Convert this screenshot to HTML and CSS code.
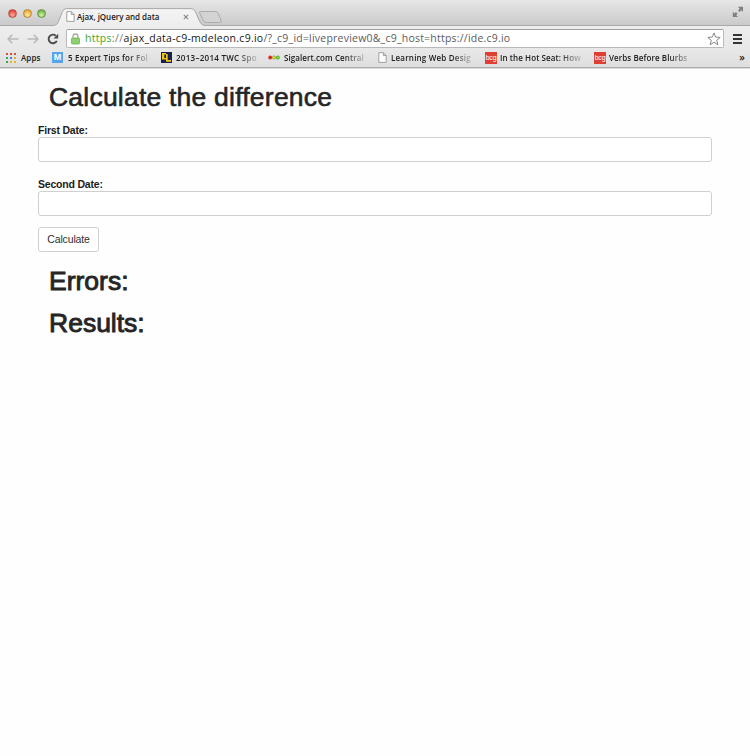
FILE: index.html
```html
<!DOCTYPE html>
<html lang="en">
<head>
<meta charset="utf-8">
<title>Ajax, jQuery and data</title>
<link rel="stylesheet" href="styles.css">
</head>
<body>
<header class="chrome">
  <div class="tabstrip">
    <div class="lights"><i class="light red"></i><i class="light yellow"></i><i class="light green"></i></div>
    <div class="tab">
      <svg class="tab-shape" width="174" height="19" viewBox="0 0 174 19">
        <defs><linearGradient id="tabfill" x1="0" y1="0" x2="0" y2="1"><stop offset="0" stop-color="#f4f4f4"/><stop offset="1" stop-color="#ededed"/></linearGradient></defs>
        <path d="M0 17.500C3.500 17.300 4.500 16 5.500 13.500L9.500 3.500Q10.800.6 13.500.6H138Q141 .6 142.300 3.500L147 14Q148.500 17.500 152 17.500V19H0Z" fill="url(#tabfill)"/>
        <path d="M0 17.500C3.500 17.300 4.500 16 5.500 13.500L9.500 3.500Q10.800.6 13.500.6H138Q141 .6 142.300 3.500L147 14Q148.500 17.500 152 17.500" fill="none" stroke="#a0a0a0" stroke-width=".9"/>
        <path d="M147.500 3.500H162.500Q164.500 3.500 165.300 5.500L168 12Q169 14.500 166.500 14.500H153.500Q151 14.500 150 12L146.700 5Q146 3.500 147.500 3.500Z" fill="#d3d3d3" stroke="#a6a6a6" stroke-width=".9"/>
      </svg>
      <svg class="page" width="9" height="11" viewBox="0 0 9 11"><path d="M.8.6H5.300L8.200 3.500V10.400H.8ZM5.300.6V3.500H8.200" fill="#fdfdfd" stroke="#999" stroke-width=".9"/></svg>
      <span class="tab-title">Ajax, jQuery and data</span>
      <svg class="close" width="6" height="6" viewBox="0 0 6 6"><path d="M.8.8L5.200 5.200M5.200.8L.8 5.200" stroke="#858585" stroke-width="1.100"/></svg>
    </div>
    <svg class="expand" width="12" height="12" viewBox="0 0 12 12"><path d="M5.800 .8H11V6L9.300 4.300L7.600 6L6 4.400L7.700 2.700Z" fill="#808080"/><path d="M6 11H.8V5.800L2.500 7.500L3.900 6.100L5.500 7.700L4.200 9.200Z" fill="#808080"/></svg>
  </div>
  <div class="toolbar">
    <svg class="nav" width="12" height="10" viewBox="0 0 12 10"><path d="M5.200.8L1.200 5L5.200 9.200M1.500 5H11.500" fill="none" stroke="#b9b9b9" stroke-width="1.600"/></svg>
    <svg class="nav forward" width="12" height="10" viewBox="0 0 12 10"><path d="M6.800.8L10.800 5L6.800 9.200M10.500 5H.5" fill="none" stroke="#b9b9b9" stroke-width="1.600"/></svg>
    <svg class="reload" width="12" height="12" viewBox="0 0 12 12"><path d="M8.800 2.700A4.300 4.300 0 1 0 9.800 7.800" fill="none" stroke="#4b4b4b" stroke-width="1.900"/><path d="M11.200.7V5.400H6.500Z" fill="#4b4b4b"/></svg>
    <div class="omnibox">
      <svg class="lock" width="9" height="12" viewBox="0 0 9 12"><path d="M2 6V3.500A2.500 2.500 0 0 1 7 3.500V6" fill="none" stroke="#a3aa9f" stroke-width="1.300"/><rect x=".5" y="5" width="8" height="6" rx=".8" fill="#84cb63" stroke="#72b655" stroke-width=".8"/><path d="M1 7H8M1 9H8" stroke="#a9df8e" stroke-width=".6"/></svg>
      <div class="url"><span class="secure">https</span><span class="sep">://</span><span class="host">ajax_data-c9-mdeleon.c9.io</span><span class="path">/?_c9_id=livepreview0&amp;_c9_host=https://ide.c9.io</span></div>
      <svg class="star" width="14" height="14" viewBox="0 0 14 14"><path d="M7 .9L8.700 5.100L13.200 5.400L9.700 8.300L10.900 12.800L7 10.300L3.100 12.800L4.300 8.300L.8 5.400L5.300 5.100Z" fill="#fff" stroke="#888" stroke-width="1"/></svg>
    </div>
    <div class="menu"><i></i><i></i><i></i></div>
  </div>
  <nav class="bookmarks">
    <div class="bm apps"><div class="grid"><i class="r"></i><i class="r"></i><i class="r"></i><i class="g"></i><i class="b"></i><i class="y"></i><i class="g"></i><i class="y"></i><i class="y"></i></div><span>Apps</span></div>
    <div class="bm tips"><b class="m-icon">M</b><span class="fade">5 Expert Tips for Fol</span></div>
    <div class="bm twc"><svg width="11" height="11" viewBox="0 0 11 11"><rect width="11" height="11" fill="#18204b"/><path d="M1 1H5V2.500H3.300V6H5V7.500H1ZM5 2H6.700V8H10V9.700H5Z" fill="#f1c51c"/></svg><span class="fade">2013–2014 TWC Spo</span></div>
    <div class="bm sig"><svg width="12" height="5" viewBox="0 0 12 5"><circle cx="2.200" cy="2.500" r="1.900" fill="#d32c22"/><circle cx="6" cy="2.500" r="1.600" fill="#e9e32f" stroke="#8c8b19" stroke-width=".7"/><circle cx="9.800" cy="2.500" r="1.600" fill="#7be23c" stroke="#378d20" stroke-width=".7"/></svg><span class="fade">Sigalert.com Central</span></div>
    <div class="bm learn"><svg width="9" height="11" viewBox="0 0 9 11"><path d="M.8.6H5.300L8.200 3.500V10.400H.8ZM5.300.6V3.500H8.200" fill="#fdfdfd" stroke="#999" stroke-width=".9"/></svg><span class="fade">Learning Web Desig</span></div>
    <div class="bm hot"><b class="bcg">bcg</b><span class="fade">In the Hot Seat: How</span></div>
    <div class="bm verbs"><b class="bcg">bcg</b><span class="fade">Verbs Before Blurbs</span></div>
    <span class="more">»</span>
  </nav>
</header>
<main>
  <h1>Calculate the difference</h1>
  <form>
    <label for="first">First Date:</label>
    <input id="first" type="text">
    <label for="second">Second Date:</label>
    <input id="second" type="text">
    <button type="button">Calculate</button>
  </form>
  <h2 class="errors">Errors:</h2>
  <h2 class="results">Results:</h2>
</main>
</body>
</html>
```
FILE: styles.css
```css
* { box-sizing: border-box; }
body { margin: 0; height: 756px; background: #fefefe; color: #252525; font-family: "Liberation Sans", sans-serif; overflow: hidden; }
svg { display: block; flex: none; }
.chrome { height: 69px; background: #e8e8e8; font-family: "Open Sans", sans-serif; border-bottom: 1px solid #dedede; }
.tabstrip { height: 26px; display: flex; position: relative; background: linear-gradient(#e7e7e7, #cacaca); border-bottom: 1px solid #a8a8a8; }
.lights { display: flex; gap: 5.500px; padding: 9px 0 0 8px; width: 53px; }
.light { width: 9px; height: 9px; border-radius: 50%; flex: none; border: 1px solid; }
.red { background: radial-gradient(circle at 50% 75%, #ffaca0, #e64a43 70%); border-color: #b5504a; }
.yellow { background: radial-gradient(circle at 50% 75%, #ffec9d, #f0ad3c 70%); border-color: #b3853e; }
.green { background: radial-gradient(circle at 50% 75%, #d9f5a8, #76bb49 70%); border-color: #64934a; }
.tab { position: relative; display: flex; width: 174px; height: 18px; margin-top: 8px; padding: 3px 0 0 13px; }
.tab-shape { position: absolute; left: 0; top: 0; }
.page, .tab-title, .close { position: relative; }
.tab-title { width: 106px; margin-left: 2px; font-size: 8px; line-height: 11px; font-weight: 600; color: #202020; white-space: nowrap; letter-spacing: -.03px; }
.close { margin-top: 3px; }
.expand { margin: 6px 6px 0 auto; }
.toolbar { height: 23px; display: flex; align-items: center; padding: 2px 7px 0 7px; background: linear-gradient(#ededed, #e8e8e8); }
.forward { margin-left: 8px; }
.reload { margin-left: 8px; }
.omnibox { width: 658px; height: 19px; margin-left: 7px; display: flex; align-items: center; background: #fff; border: 1px solid #b9b9b9; border-top-color: #a0a0a0; border-radius: 2px; padding: 0 2px 0 4px; flex: none; }
.url { display: flex; margin-left: 5px; font-size: 10.500px; line-height: 15px; white-space: nowrap; color: #777; }
.secure { color: #43a51d; font-weight: 500; letter-spacing: .3px; }
.sep { letter-spacing: .4px; }
.host { color: #171717; font-weight: 500; letter-spacing: .27px; }
.path { color: #5b5b5b; letter-spacing: .22px; }
.star { margin-left: auto; }
.menu { margin-left: 9px; display: grid; gap: 2px; width: 9px; height: 10px; flex: none; }
.menu i { height: 2px; background: #343434; }
.bookmarks { height: 19px; display: flex; background: linear-gradient(#e8e8e8, #dedede); border-bottom: 1px solid #a8a8a8; padding: 0 5px 1px 6px; font-size: 8px; line-height: 11px; font-weight: 600; letter-spacing: .08px; color: #202020; }
.bm { display: flex; align-items: center; white-space: nowrap; flex: none; }
.bm span { margin-left: 4px; flex: none; }
.fade { -webkit-mask-image: linear-gradient(90deg, #000 60px, transparent 86px); mask-image: linear-gradient(90deg, #000 60px, transparent 86px); }
.grid { display: grid; grid-template-columns: repeat(3, 2px); grid-auto-rows: 2px; gap: 2px; }
.grid .r { background: #dd4c35; }
.grid .g { background: #35a663; }
.grid .b { background: #4380da; }
.grid .y { background: #e4b32c; }
.apps { width: 46px; }
.apps span { margin-left: 5px; }
.tips { width: 109px; }
.bm.tips span { letter-spacing: .18px; margin-left: 5px; }
.twc { width: 107px; }
.bm.twc span { letter-spacing: .28px; }
.sig { width: 110px; }
.learn { width: 107px; }
.bm.learn span { letter-spacing: .2px; }
.hot { width: 109px; }
.bm.hot span, .bm.verbs span { margin-left: 3px; }
.verbs { width: 107px; }
.m-icon { width: 11px; height: 11px; background: #55a5ed; color: #fff; font: bold 9px/11px "Liberation Sans", sans-serif; text-align: center; letter-spacing: 0; }
.bcg { width: 12px; height: 12px; background: #df3e32; color: #fff; font: 7px/11px "Liberation Sans", sans-serif; text-align: center; letter-spacing: -.2px; }
.more { margin-left: auto; align-self: center; font-size: 10px; }
main { padding: 12px 38px 0; }
h1, h2 { margin: 0 0 0 11px; font-size: 26.500px; line-height: 32px; font-weight: normal; -webkit-text-stroke: .6px #252525; white-space: nowrap; }
h1 { letter-spacing: .22px; }
h2 { -webkit-text-stroke-width: .9px; }
form { padding-top: 10px; }
label { display: block; height: 14px; font-size: 10.500px; line-height: 14px; font-weight: bold; color: #1c1c1c; letter-spacing: -.2px; }
input { display: block; width: 674px; height: 25px; border: 1px solid #d0d0d0; border-radius: 3px; background: #fff; margin: 0 0 15px; outline: 0; }
#second { margin-bottom: 11px; }
button { display: block; width: 61px; height: 25px; padding: 0; border: 1px solid #d0d0d0; border-radius: 3px; background: #fff; color: #303030; font: 10.500px/15px "Liberation Sans", sans-serif; letter-spacing: -.15px; }
.errors { margin-top: 13px; }
.results { margin-top: 10px; }
```
